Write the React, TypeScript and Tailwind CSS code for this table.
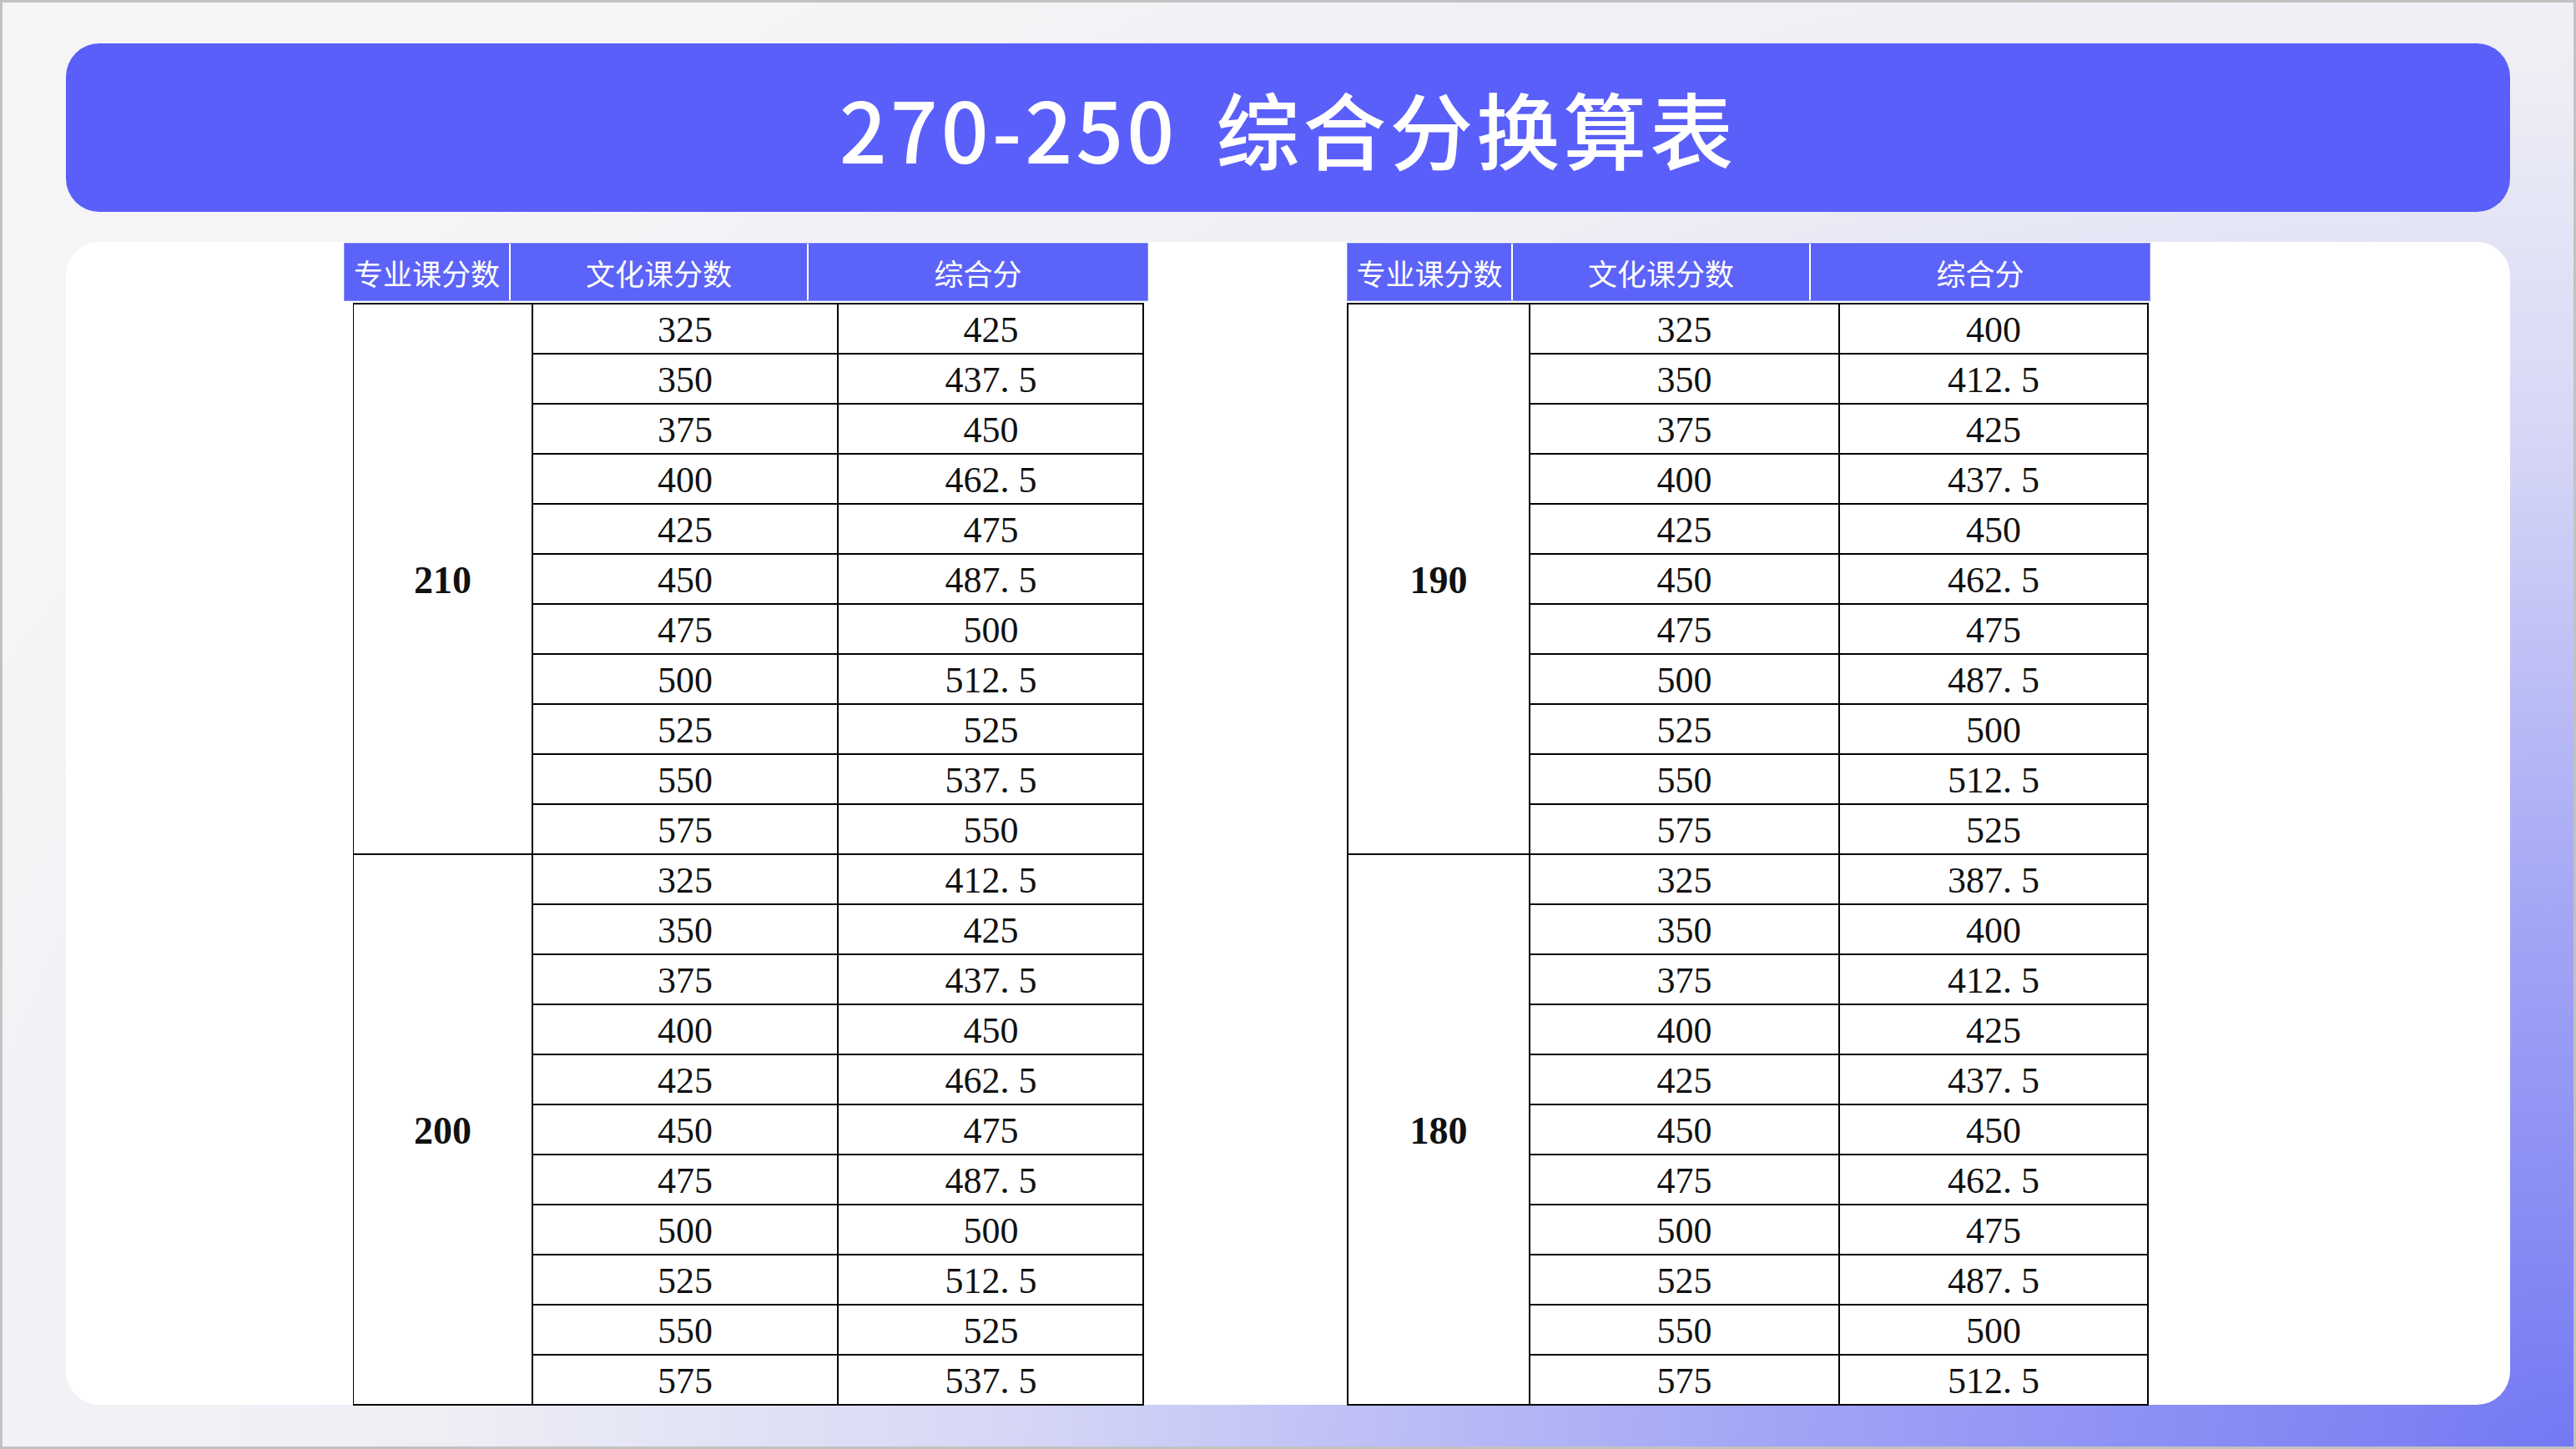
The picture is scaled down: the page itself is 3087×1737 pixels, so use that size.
import React from 'react';

type Group = { major: number; base: number };

const LEFT_GROUPS: Group[] = [
  { major: 210, base: 425 },
  { major: 200, base: 412.5 },
];

const RIGHT_GROUPS: Group[] = [
  { major: 190, base: 400 },
  { major: 180, base: 387.5 },
];

const CULTURE = [325, 350, 375, 400, 425, 450, 475, 500, 525, 550, 575];

// "437.5" is shown as "437. 5" in the source sheet (wide period)
function Score({ value }: { value: number }) {
  const [int, dec] = String(value).split('.');
  return (
    <span>
      {int}
      {dec && (
        <>
          <span className="mr-[11px]">.</span>
          {dec}
        </>
      )}
    </span>
  );
}

function HeaderRow({ widths }: { widths: [string, string, string] }) {
  return (
    <div className="flex h-[70px] bg-[#5c63f8] text-white text-[35px] leading-none font-['Noto_Sans_CJK_SC',sans-serif] border border-[#8c91fa]">
      <div className={`${widths[0]} flex items-center justify-center border-r-2 border-white`}>专业课分数</div>
      <div className={`${widths[1]} flex items-center justify-center border-r-2 border-white`}>文化课分数</div>
      <div className={`${widths[2]} flex items-center justify-center`}>综合分</div>
    </div>
  );
}

function GroupBlock({
  group,
  first,
  cols,
}: {
  group: Group;
  first: boolean;
  cols: [string, string, string];
}) {
  return (
    <div className={`flex ${first ? '' : 'border-t-2 border-black'}`}>
      <div className={`${cols[0]} shrink-0 flex items-center justify-center pt-[3px] border-r-2 border-black font-bold text-[46px]`}>
        {group.major}
      </div>
      <div className="flex flex-col">
        {CULTURE.map((c, i) => (
          <div
            key={c}
            className={`flex ${i === 0 ? 'h-[58px]' : 'h-[60px] border-t-2 border-black'}`}
          >
            <div className={`${cols[1]} flex items-center justify-center pt-[3px] border-r-2 border-black`}>{c}</div>
            <div className={`${cols[2]} flex items-center justify-center pt-[3px]`}>
              <Score value={group.base + 12.5 * i} />
            </div>
          </div>
        ))}
      </div>
    </div>
  );
}

function ScoreTable({
  groups,
  headerCols,
  bodyCols,
  bodyClass,
}: {
  groups: Group[];
  headerCols: [string, string, string];
  bodyCols: [string, string, string];
  bodyClass: string;
}) {
  return (
    <div className="flex flex-col">
      <HeaderRow widths={headerCols} />
      <div
        className={`${bodyClass} mt-[2px] border-t-2 border-r-2 border-b-2 border-black text-[44px] leading-none text-[#111] font-['Liberation_Serif','Times_New_Roman',serif]`}
      >
        {groups.map((g, i) => (
          <GroupBlock key={g.major} group={g} first={i === 0} cols={bodyCols} />
        ))}
      </div>
    </div>
  );
}

export default function App() {
  return (
    <div className="w-[3087px] h-[1737px] border-[3px] border-[#c2c2c2] flex flex-col px-[76px] pt-[49px] pb-[50px] gap-[36px] bg-[radial-gradient(3400px_2200px_at_100%_100%,#7478f3_0%,#a5a8f5_30%,#d6d7f6_55%,#eeeef5_75%,#f5f5f7_100%)]">
      <div className="h-[202px] shrink-0 rounded-[40px] bg-[#5a5ffa] flex items-center justify-center">
        <h1 className="text-white text-[100px] leading-none font-medium tracking-[4px] font-['Noto_Sans_CJK_SC',sans-serif]">
          <span>270-250</span>
          <span className="ml-[46px]">综合分换算表</span>
        </h1>
      </div>
      <div className="h-[1394px] shrink-0 rounded-[40px] bg-white flex items-start pl-[333px] pt-[1px] gap-[238px]">
        <ScoreTable
          groups={LEFT_GROUPS}
          headerCols={['w-[199px]', 'w-[357px]', 'w-[406px]']}
          bodyCols={['w-[215px]', 'w-[366px]', 'w-[365px]']}
          bodyClass="ml-[11px] w-[948px] border-l"
        />
        <ScoreTable
          groups={RIGHT_GROUPS}
          headerCols={['w-[198px]', 'w-[357px]', 'w-[406px]']}
          bodyCols={['w-[218px]', 'w-[371px]', 'w-[368px]']}
          bodyClass="w-[961px] border-l-2"
        />
      </div>
    </div>
  );
}
